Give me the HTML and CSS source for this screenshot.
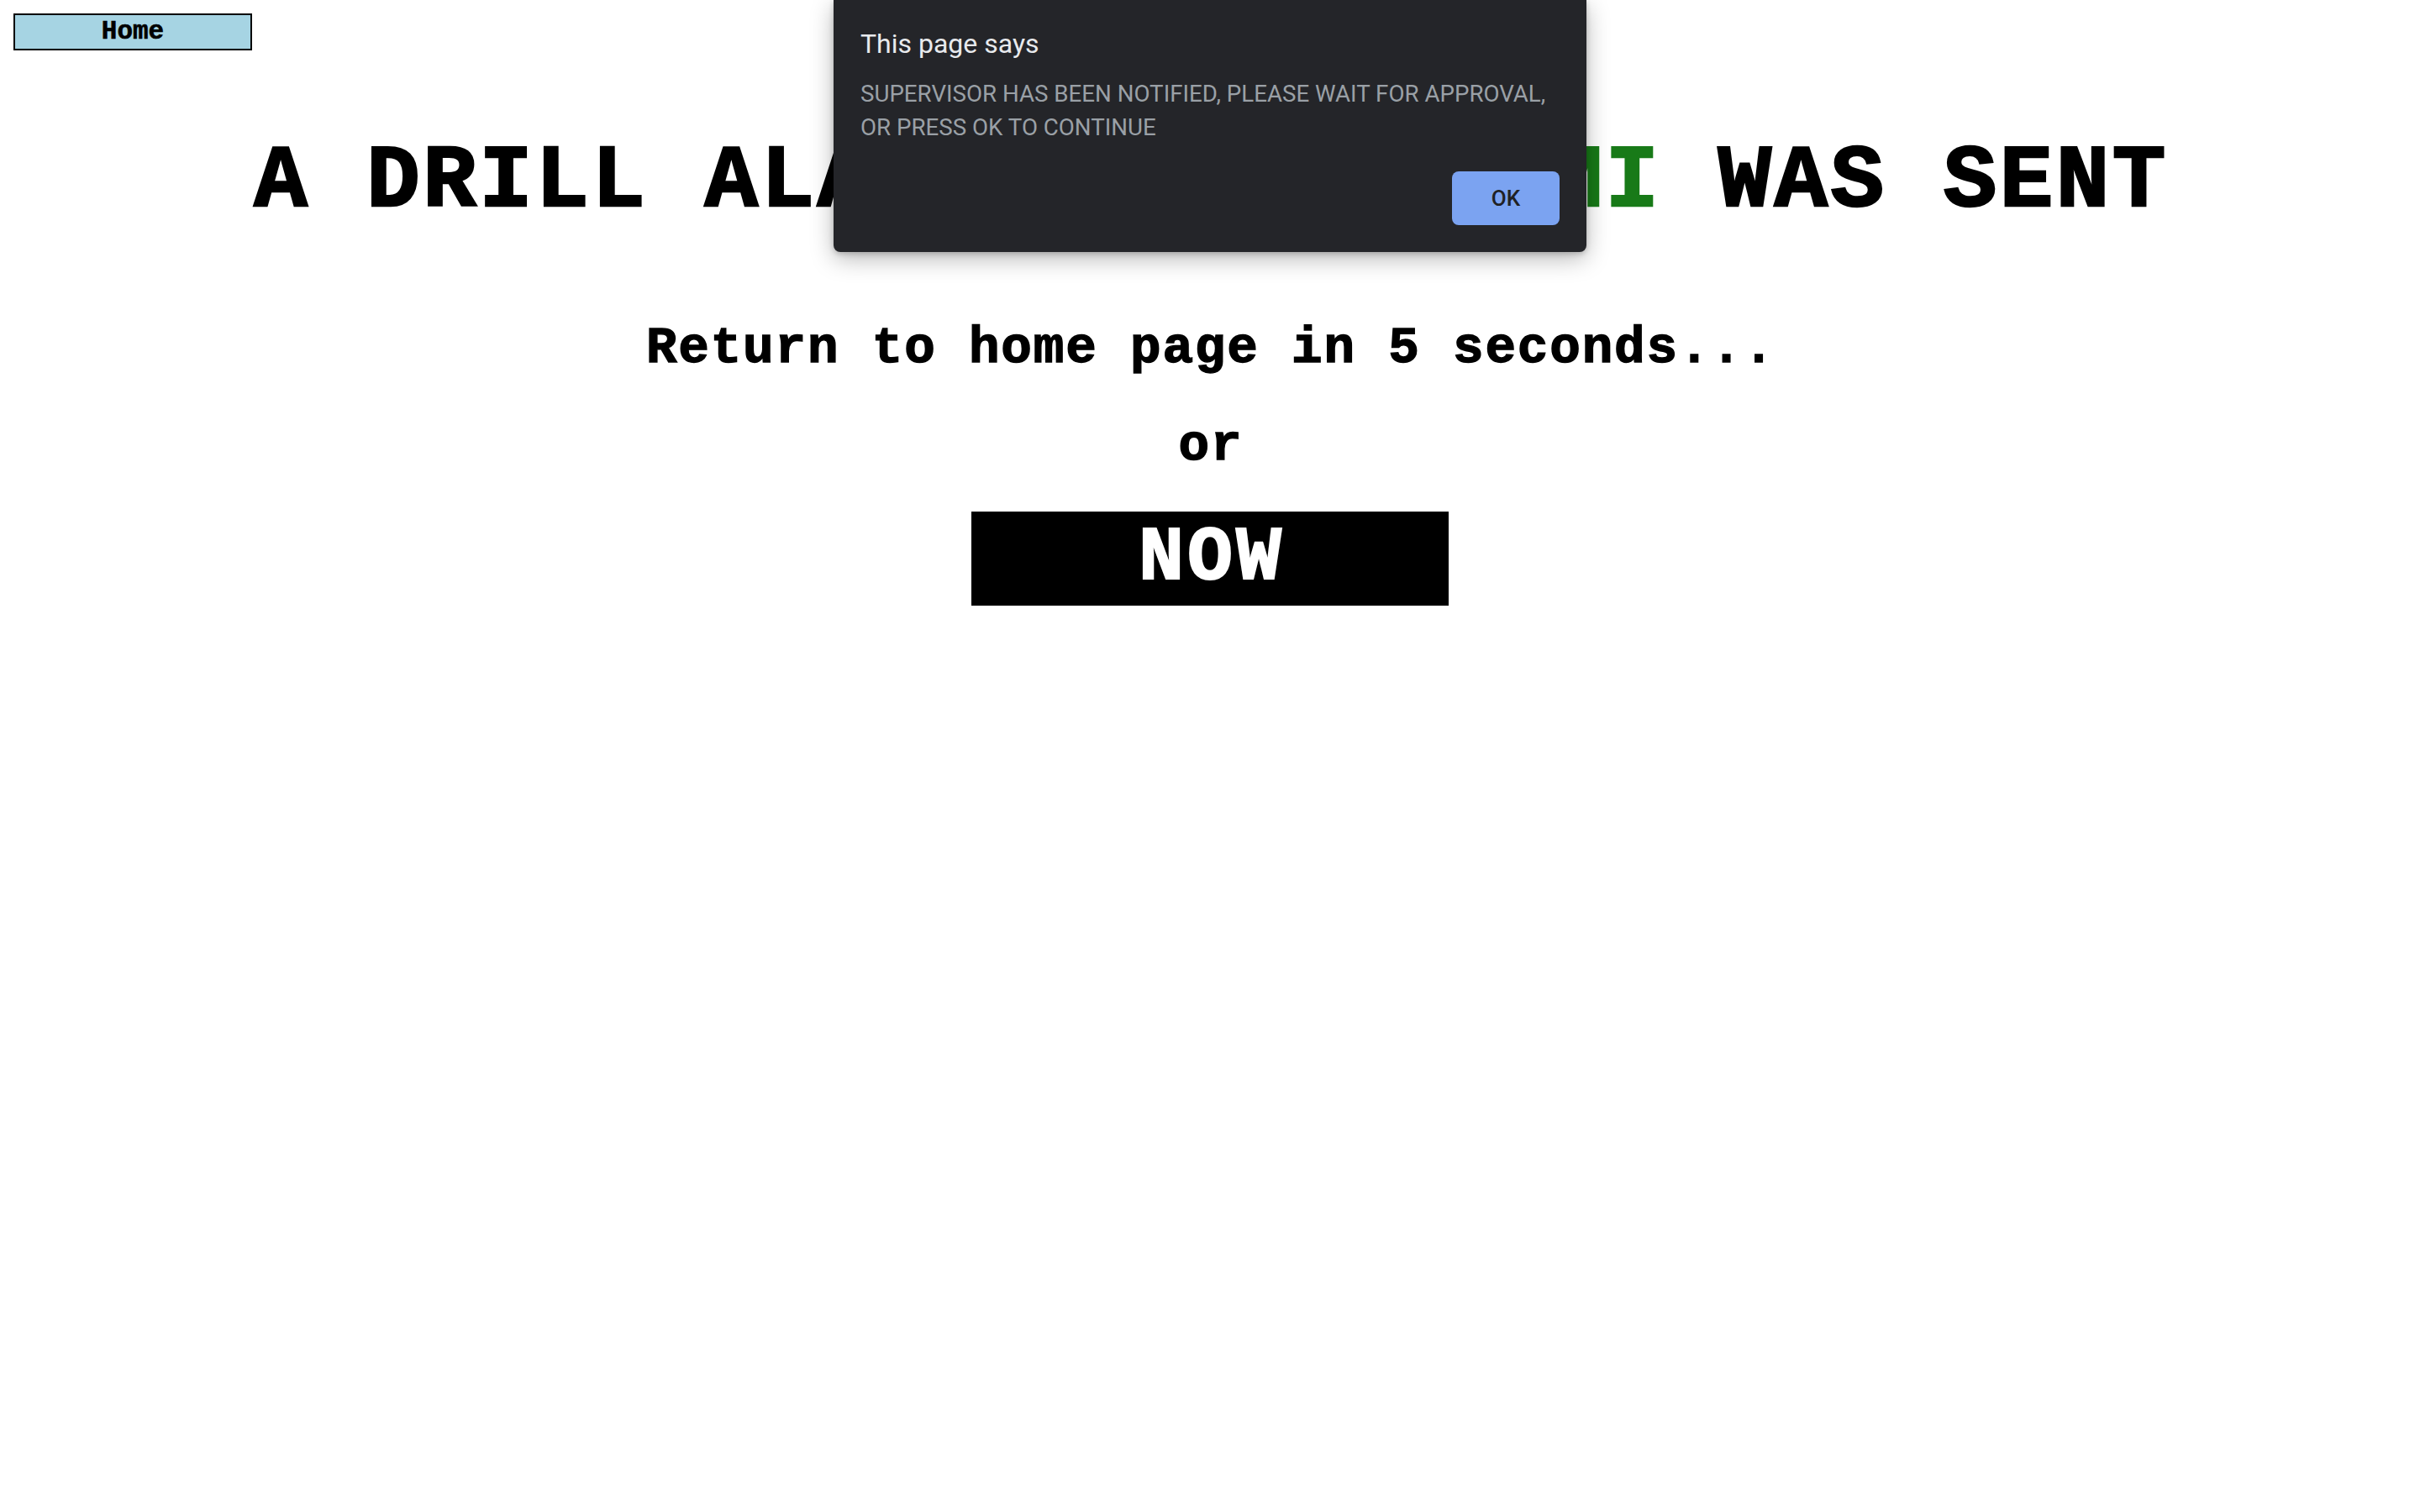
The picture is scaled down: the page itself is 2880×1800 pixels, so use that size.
FILE: index.html
```html
<!DOCTYPE html>
<html lang="en">
<head>
<meta charset="utf-8">
<title>Drill</title>
<link rel="stylesheet" href="styles.css">
</head>
<body>
<div class="page">
  <div class="topbar">
    <button class="home-btn" type="button">Home</button>
  </div>
  <main class="content">
    <h1 class="title">A DRILL ALARM FOR <span class="green">TSUNAMI</span> WAS SENT</h1>
    <h2 class="sub">Return to home page in 5 seconds...</h2>
    <h2 class="or">or</h2>
    <button class="now-btn" type="button">NOW</button>
  </main>
</div>
<div class="dialog" role="alertdialog">
  <div class="dialog-title">This page says</div>
  <div class="dialog-msg">SUPERVISOR HAS BEEN NOTIFIED, PLEASE WAIT FOR APPROVAL,<br>OR PRESS OK TO CONTINUE</div>
  <div class="dialog-actions">
    <button class="ok-btn" type="button">OK</button>
  </div>
</div>
</body>
</html>
```

FILE: styles.css
```css
html, body {
  margin: 0;
  padding: 0;
  background: #ffffff;
}

.page {
  padding: 16px;
  font-family: "Liberation Mono", "Courier New", monospace;
  color: #000000;
}

.topbar {
  display: flex;
}

.home-btn {
  width: 284px;
  height: 44px;
  margin: 0;
  padding: 0;
  border: 2px solid #000000;
  background: #a6d4e3;
  font-family: "Liberation Mono", "Courier New", monospace;
  font-weight: bold;
  font-size: 31px;
  line-height: 40px;
  color: #000000;
  -webkit-text-stroke: 0.6px currentColor;
}

.content {
  display: flex;
  flex-direction: column;
  align-items: center;
}

.title {
  margin: 91px 0 0 0;
  padding-left: 3px;
  font-size: 106px;
  letter-spacing: 3.4px;
  line-height: 132px;
  font-weight: bold;
  white-space: nowrap;
  -webkit-text-stroke: 2.5px currentColor;
}

.green {
  color: #187a18;
}

.sub {
  margin: 96px 0 0 0;
  padding-left: 2px;
  font-size: 61px;
  letter-spacing: 1.8px;
  line-height: 72px;
  font-weight: bold;
  white-space: nowrap;
  -webkit-text-stroke: 1.4px currentColor;
}

.or {
  margin: 44px 0 0 0;
  padding-left: 2px;
  font-size: 61px;
  letter-spacing: 1.8px;
  line-height: 72px;
  font-weight: bold;
  -webkit-text-stroke: 1.4px currentColor;
}

.now-btn {
  margin-top: 42px;
  width: 568px;
  height: 112px;
  padding: 0 0 0 4px;
  border: none;
  background: #000000;
  color: #ffffff;
  font-family: "Liberation Mono", "Courier New", monospace;
  font-weight: bold;
  font-size: 90px;
  letter-spacing: 4px;
  line-height: 112px;
  -webkit-text-stroke: 2px currentColor;
}

.dialog {
  position: absolute;
  top: 0;
  left: 992px;
  width: 896px;
  box-sizing: border-box;
  padding: 32px;
  background: #242529;
  border-radius: 0 0 8px 8px;
  box-shadow: 0 8px 28px rgba(0, 0, 0, 0.28), 0 2px 6px rgba(0, 0, 0, 0.2);
  font-family: Roboto, "Noto Sans", sans-serif;
}

.dialog-title {
  font-size: 32px;
  line-height: 40px;
  color: #e8eaed;
}

.dialog-msg {
  margin-top: 20px;
  font-size: 27.7px;
  line-height: 40px;
  color: #9aa0a6;
}

.dialog-actions {
  display: flex;
  justify-content: flex-end;
  margin-top: 32px;
}

.ok-btn {
  width: 128px;
  height: 64px;
  border: none;
  border-radius: 8px;
  background: #7ba3f1;
  color: #202124;
  font-family: Roboto, "Noto Sans", sans-serif;
  font-size: 26px;
  font-weight: 500;
  padding: 0;
}
```
